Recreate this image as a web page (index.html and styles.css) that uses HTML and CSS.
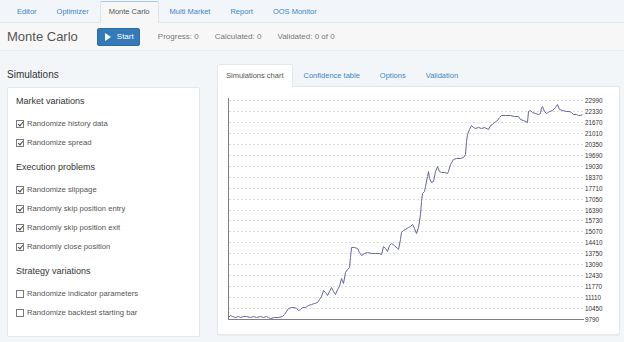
FILE: index.html
```html
<!DOCTYPE html>
<html lang="en">
<head>
    <meta charset="UTF-8">
    <meta name="viewport" content="width=device-width, initial-scale=1.0">
    <title>Monte Carlo</title>
    <link rel="stylesheet" href="styles.css">
</head>
<body>
    <div class="topnav">
        <a class="tab">Editor</a>
        <a class="tab">Optimizer</a>
        <a class="tab active">Monte Carlo</a>
        <a class="tab">Multi Market</a>
        <a class="tab">Report</a>
        <a class="tab">OOS Monitor</a>
    </div>

    <div class="toolbar">
        <h1 class="title">Monte Carlo</h1>
        <button class="btn-start">
            <svg width="6" height="8" viewBox="0 0 6 8"><path d="M0 0L6 4L0 8Z" fill="#fff"/></svg>
            Start
        </button>
        <span class="stat">Progress: 0</span>
        <span class="stat">Calculated: 0</span>
        <span class="stat">Validated: 0 of 0</span>
    </div>

    <div class="main">
        <div class="left-col">
            <h2 class="heading">Simulations</h2>
            <div class="panel sim-panel">
                <div class="group">
                    <h3>Market variations</h3>
                    <div class="item"><span class="box checked"></span>Randomize history data</div>
                    <div class="item"><span class="box checked"></span>Randomize spread</div>
                </div>
                <div class="group">
                    <h3>Execution problems</h3>
                    <div class="item"><span class="box checked"></span>Randomize slippage</div>
                    <div class="item"><span class="box checked"></span>Randomly skip position entry</div>
                    <div class="item"><span class="box checked"></span>Randomly skip position exit</div>
                    <div class="item"><span class="box checked"></span>Randomly close position</div>
                </div>
                <div class="group">
                    <h3>Strategy variations</h3>
                    <div class="item"><span class="box"></span>Randomize indicator parameters</div>
                    <div class="item"><span class="box"></span>Randomize backtest starting bar</div>
                </div>
            </div>
        </div>

        <div class="right-col">
            <div class="subtabs">
                <a class="subtab active">Simulations chart</a>
                <a class="subtab">Confidence table</a>
                <a class="subtab">Options</a>
                <a class="subtab">Validation</a>
            </div>
            <div class="panel chart-panel">
                <svg id="chart" width="401" height="247" viewBox="0 0 401 247"></svg>
            </div>
        </div>
    </div>

    <script>
        const svgNs = 'http://www.w3.org/2000/svg';
        const chart = document.getElementById('chart');

        const labels = [22990, 22330, 21670, 21010, 20350, 19690, 19030, 18370, 17710, 17050,
            16390, 15730, 15070, 14410, 13750, 13090, 12430, 11770, 11110, 10450, 9790];

        // balance curve, in page pixels
        const points = [
            228,316, 230,314, 232,315, 235,316, 238,315, 240,316, 243,315, 246,315, 250,316, 253,315,
            256,316, 260,315, 263,316, 266,315, 268,316, 270,317, 274,316, 278,316, 282,315, 284,313,
            286,310, 288,307, 291,306, 294,306, 296,307, 298,309, 300,308, 302,306, 305,306, 308,304,
            311,303, 314,302, 317,301, 319,298, 321,295, 323,289, 325,291, 327,294, 329,290, 331,286,
            333,290, 335,293, 337,288, 339,285, 341,277, 343,282, 345,271, 347,268, 349,266, 350,256,
            351,246, 354,246, 357,247, 359,251, 361,254, 364,252, 367,251, 371,252, 375,252, 379,252,
            381,253, 383,245, 385,247, 387,250, 389,244, 391,242, 394,244, 397,247, 398,248, 400,238,
            401,231, 403,229, 405,228, 408,226, 410,225, 412,223, 414,227, 416,232, 418,226, 420,213,
            421,200, 422,192, 424,190, 425,185, 427,175, 428,170, 429,177, 431,181, 433,180, 435,170,
            437,165, 439,170, 441,171, 444,171, 447,172, 448,170, 450,163, 453,158, 456,157, 460,157,
            463,156, 465,153, 466,140, 467,133, 469,128, 471,124, 473,126, 475,127, 478,126, 481,127,
            484,126, 488,128, 490,124, 492,123, 494,121, 497,119, 499,116, 501,114, 505,114, 510,114,
            514,115, 518,115, 520,118, 523,119, 527,121, 528,110, 530,109, 532,111, 535,112, 538,113,
            540,112, 541,106, 542,105, 544,110, 546,112, 549,110, 552,109, 555,106, 557,103, 559,108,
            562,109, 566,110, 569,110, 571,111, 573,113, 576,113, 578,114, 580,114, 582,113
        ];

        const offX = 218, offY = 86;
        const gridTop = 99 - offY, gridStep = 10.95;

        const add = (tag, attrs, text) => {
            const el = document.createElementNS(svgNs, tag);
            for (const k in attrs) el.setAttribute(k, attrs[k]);
            if (text !== undefined) el.textContent = text;
            chart.appendChild(el);
            return el;
        };

        labels.forEach((val, i) => {
            const y = Math.round(gridTop + i * gridStep) + 0.5;
            if (i < labels.length - 1) {
                add('line', { x1: 11, x2: 365, y1: y, y2: y, stroke: '#dcdcdc', 'stroke-dasharray': '2,2' });
            }
            add('text', { x: 367, y: y + 2.2, 'class': 'ylabel' }, val);
        });

        add('line', { x1: 10.5, x2: 10.5, y1: 11, y2: 233, stroke: '#808080' });
        add('line', { x1: 10, x2: 366, y1: 232.5, y2: 232.5, stroke: '#808080' });

        let d = '';
        for (let i = 0; i < points.length; i += 2) {
            d += (i ? 'L' : 'M') + (points[i] - offX + 0.5) + ' ' + (points[i + 1] - offY + 0.5);
        }
        add('path', { d: d, fill: 'none', stroke: '#6464aa', 'stroke-width': 1 });
    </script>
</body>
</html>
```

FILE: styles.css
```css
body {
    margin: 0;
    padding: 0;
    font-family: "Liberation Sans", Arial, sans-serif;
    background-color: #f2f6f9;
    color: #333;
}
.topnav {
    display: flex;
    height: 23px;
    padding-left: 8px;
    box-sizing: border-box;
    background-color: #f2f6fa;
    border-bottom: 1px solid #e6e9ec;
    align-items: flex-end;
}
.tab {
    display: block;
    height: 21px;
    line-height: 20px;
    padding: 0 8px;
    margin-right: 2px;
    font-size: 7.5px;
    color: #3a85c6;
    box-sizing: border-box;
    border: 1px solid transparent;
    border-bottom: none;
}
.tab.active {
    background-color: #f7f7f7;
    color: #555;
    border-color: #dde3e8;
    border-top-color: #a9c7e3;
    border-radius: 2px 2px 0 0;
    height: 22px;
    margin-bottom: -1px;
}
.toolbar {
    display: flex;
    align-items: center;
    height: 27px;
    padding-left: 7px;
    background-color: #f7f7f7;
    border-bottom: 1px solid #eceeef;
}
.title {
    margin: 0 19px 0 0;
    font-size: 13px;
    font-weight: normal;
    color: #555;
}
.btn-start {
    display: flex;
    align-items: center;
    gap: 6px;
    width: 43px;
    height: 18px;
    padding: 0 0 0 7px;
    margin-right: 18px;
    background-color: #337ab7;
    border: 1px solid #2e6da4;
    border-radius: 2px;
    color: white;
    font-family: "Liberation Sans", Arial, sans-serif;
    font-size: 8px;
    box-sizing: border-box;
}
.stat {
    font-size: 8px;
    color: #777;
    margin-right: 16px;
}
.main {
    display: flex;
    gap: 17px;
    padding: 13px 4px 0 7px;
}
.left-col {
    width: 193px;
}
.right-col {
    flex: 1;
}
.heading {
    margin: 0;
    height: 23px;
    line-height: 22px;
    font-size: 10px;
    font-weight: normal;
    color: #333;
}
.panel {
    background-color: white;
    border: 1px solid #e4e7ea;
    border-radius: 2px;
    box-shadow: 0 1px 1px rgba(0, 0, 0, 0.04);
    box-sizing: border-box;
}
.sim-panel {
    height: 250px;
    padding: 6px 8px;
}
.group {
    margin-bottom: 8px;
}
.group h3 {
    margin: 0 0 6px;
    height: 14px;
    line-height: 14px;
    font-size: 9px;
    font-weight: normal;
    color: #333;
}
.item {
    display: flex;
    align-items: center;
    height: 19px;
    font-size: 7.7px;
    color: #555;
}
.box {
    display: inline-block;
    width: 8px;
    height: 8px;
    margin-right: 3px;
    border: 1px solid #7a7a7a;
    box-sizing: border-box;
    background-color: white;
}
.box.checked::after {
    content: "";
    display: block;
    width: 2px;
    height: 4px;
    margin: 0 0 0 1.5px;
    border-right: 1px solid #444;
    border-bottom: 1px solid #444;
    transform: rotate(40deg);
}
.subtabs {
    display: flex;
    height: 22px;
}
.subtab {
    display: block;
    height: 22px;
    line-height: 21px;
    padding: 0 8px;
    margin-right: 2px;
    font-size: 7.5px;
    color: #3a85c6;
    box-sizing: border-box;
    border: 1px solid transparent;
    border-bottom: none;
}
.subtab.active {
    background-color: white;
    color: #555;
    border-color: #e4e7ea;
    border-radius: 2px 2px 0 0;
    height: 23px;
    position: relative;
    z-index: 1;
}
.chart-panel {
    height: 249px;
}
#chart {
    display: block;
}
.ylabel {
    font-family: "Liberation Sans", Arial, sans-serif;
    font-size: 6.3px;
    fill: #333;
}
```
